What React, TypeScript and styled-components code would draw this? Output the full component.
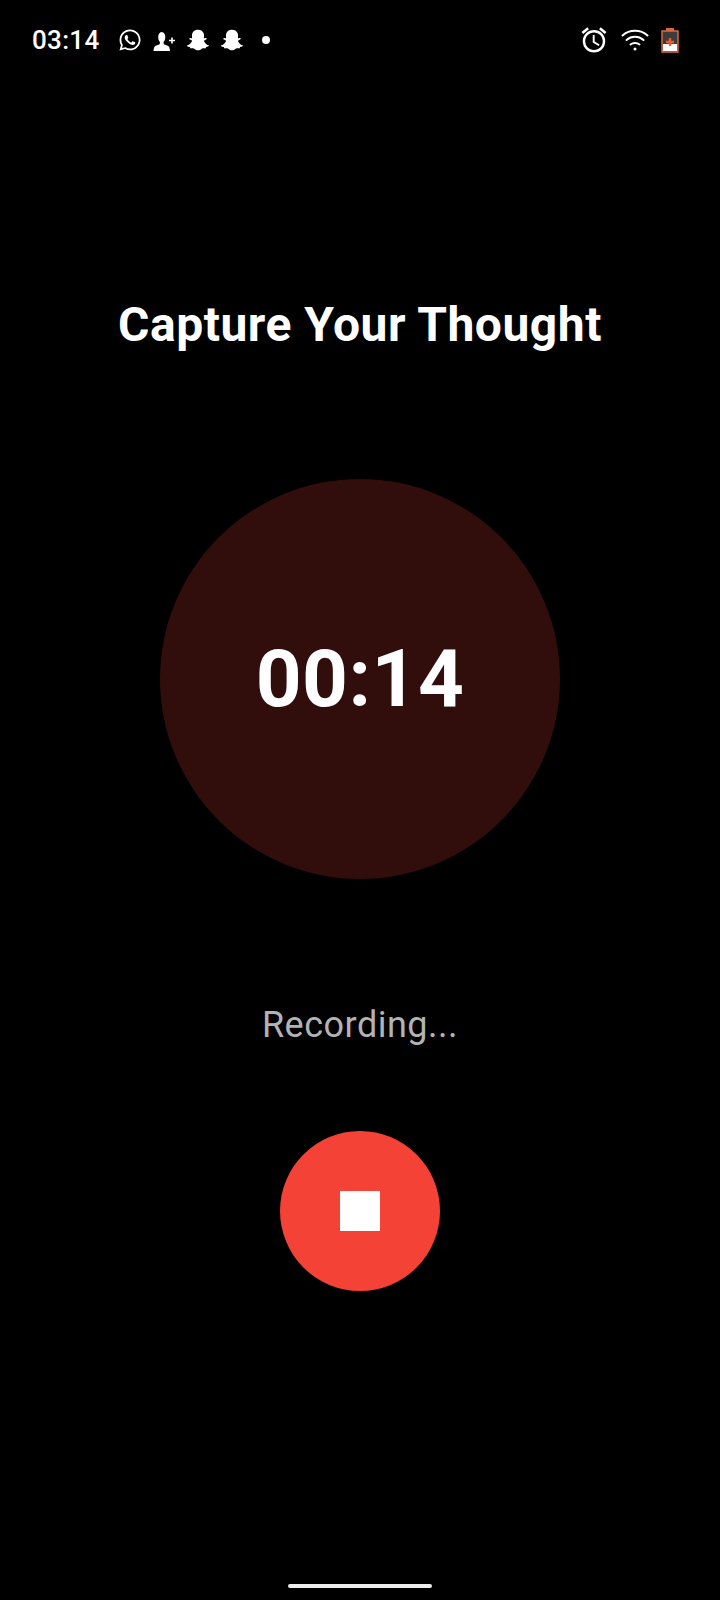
import React from "react";
import styled, { createGlobalStyle } from "styled-components";
import { FaSnapchatGhost, FaWhatsapp } from "react-icons/fa";
import { MdOutlineAlarm } from "react-icons/md";

const GlobalStyle = createGlobalStyle`
  html, body {
    margin: 0;
    padding: 0;
    background: #000;
  }
`;

const Screen = styled.div`
  width: 720px;
  height: 1600px;
  background: #000;
  color: #fff;
  font-family: Roboto, "Liberation Sans", sans-serif;
  display: flex;
  flex-direction: column;
  overflow: hidden;
`;

const StatusBar = styled.div`
  height: 80px;
  flex: none;
  display: flex;
  align-items: center;
  justify-content: space-between;
  padding: 0 41px 0 32px;
  box-sizing: border-box;
`;

const StatusLeft = styled.div`
  display: flex;
  align-items: center;
`;

const StatusRight = styled.div`
  display: flex;
  align-items: center;
  gap: 12px;
`;

const Clock = styled.span`
  font-size: 26px;
  font-weight: 500;
  line-height: 30px;
  letter-spacing: 0.3px;
  width: 86px;
`;

const NotificationIcons = styled.div`
  display: flex;
  align-items: center;
  gap: 10px;
  font-size: 24px;
`;

const SnapIcon = styled(FaSnapchatGhost)`
  width: 22px;
  height: 22px;
  margin: 0 1px;
`;

const Dot = styled.span`
  width: 8px;
  height: 8px;
  margin-left: 8px;
  border-radius: 50%;
  background: #fff;
`;

const Main = styled.main`
  flex: 1;
  display: flex;
  flex-direction: column;
  align-items: center;
`;

const Title = styled.h1`
  margin: 213px 0 0;
  font-size: 48px;
  font-weight: 700;
  line-height: 64px;
  letter-spacing: 0.5px;
`;

const TimerCircle = styled.div`
  width: 400px;
  height: 400px;
  margin-top: 122px;
  border-radius: 50%;
  background: #310e0c;
  display: flex;
  align-items: center;
  justify-content: center;
`;

const TimerText = styled.span`
  font-size: 80px;
  font-weight: 700;
  line-height: 94px;
  letter-spacing: 0.5px;
`;

const StatusText = styled.p`
  margin: 121px 0 0;
  font-size: 36px;
  line-height: 50px;
  letter-spacing: 0.5px;
  color: #b3b3b3;
`;

const StopButton = styled.button`
  width: 160px;
  height: 160px;
  margin-top: 81px;
  padding: 0;
  border: none;
  border-radius: 50%;
  background: #f44336;
  display: flex;
  align-items: center;
  justify-content: center;
`;

const StopSquare = styled.span`
  width: 40px;
  height: 40px;
  background: #fff;
`;

const HomeBar = styled.div`
  flex: none;
  width: 144px;
  height: 4px;
  margin: 0 auto 12px;
  border-radius: 2px;
  background: #ececec;
`;

const AddContactIcon = () => (
  <svg width="24" height="24" viewBox="0 0 24 24" fill="#fff">
    <path d="M9.500 4c2.300 0 3.800 2 3.800 5 0 2.200-.7 4-1.700 5v1.500c0 .5.3.8.8 1l3.300 1.300c1.300.5 2 1.700 2.300 5.200H1.500c.3-3.500 1-4.700 2.300-5.200l3.300-1.300c.5-.2.8-.5.800-1V14c-1-1-1.700-2.800-1.700-5 0-3 1.500-5 3.800-5z" />
    <path d="M19.200 9.500h1.600v2.200H23v1.600h-2.200v2.200h-1.600v-2.200H17v-1.600h2.200z" />
  </svg>
);

const WifiIcon = () => (
  <svg width="28" height="24" viewBox="0 0 28 24" fill="none" stroke="#fff" strokeWidth="2" strokeLinecap="round">
    <path d="M1.500 7.500C8.500 1.300 19.500 1.300 26.500 7.500" />
    <path d="M5.500 12C10.500 7.800 17.500 7.800 22.500 12" />
    <path d="M9.500 16.500C12 14.500 16 14.500 18.500 16.500" />
    <circle cx="14" cy="21" r="1.500" fill="#fff" stroke="none" />
  </svg>
);

const BatteryIcon = () => (
  <svg width="18" height="25" viewBox="0 0 18 25">
    <rect x="5" y="0" width="8" height="3" fill="#d8683f" />
    <rect x="1" y="3" width="16" height="21" fill="#3c3c3c" stroke="#d8683f" strokeWidth="1.500" />
    <rect x="2" y="16" width="14" height="7" fill="#fff" />
    <path d="M7.800 10h2.400v2.800H13v2.400h-2.800V18H7.800v-2.800H5v-2.400h2.800z" fill="#ee5a30" />
  </svg>
);

const App: React.FC = () => {
  return (
    <Screen>
      <GlobalStyle />
      <StatusBar>
        <StatusLeft>
          <Clock>03:14</Clock>
          <NotificationIcons>
            <FaWhatsapp />
            <AddContactIcon />
            <SnapIcon />
            <SnapIcon />
            <Dot />
          </NotificationIcons>
        </StatusLeft>
        <StatusRight>
          <MdOutlineAlarm size={30} />
          <WifiIcon />
          <BatteryIcon />
        </StatusRight>
      </StatusBar>
      <Main>
        <Title>Capture Your Thought</Title>
        <TimerCircle>
          <TimerText>00:14</TimerText>
        </TimerCircle>
        <StatusText>Recording...</StatusText>
        <StopButton aria-label="Stop recording">
          <StopSquare />
        </StopButton>
      </Main>
      <HomeBar />
    </Screen>
  );
};

export default App;
